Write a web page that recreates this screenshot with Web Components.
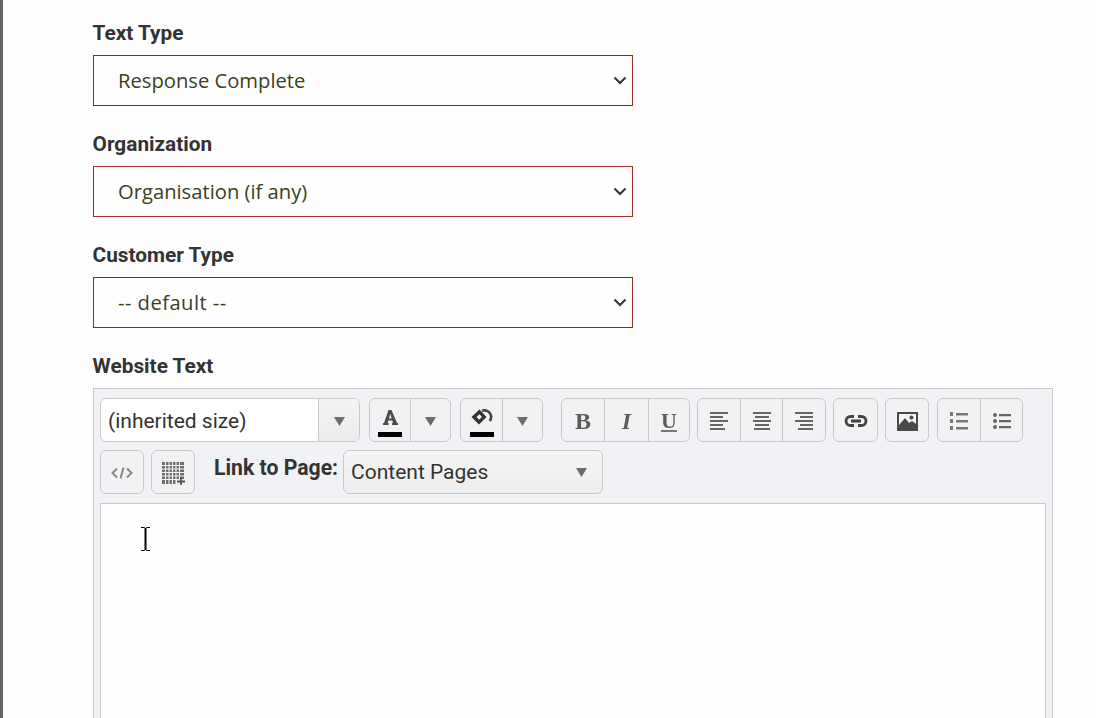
<!DOCTYPE html>
<html><head><meta charset="utf-8">
<style>
html,body{margin:0;padding:0;height:718px;overflow:hidden;background:#fefefe}
body{font-family:Roboto,"Liberation Sans",sans-serif}
app-page{display:block;height:718px;overflow:hidden}
</style></head><body>
<app-page>
<form-select label="Text Type" value="Response Complete"></form-select>
<form-select label="Organization" value="Organisation (if any)" tone="#a33434"></form-select>
<form-select label="Customer Type" value="-- default --" track=".45px"></form-select>
<rich-editor label="Website Text"></rich-editor>
</app-page>
<script>
class AppPage extends HTMLElement{constructor(){super();this.attachShadow({mode:'open'}).innerHTML=`<style>
:host{display:block;border-left:3px solid #666;padding:20px 43px 0 90px;box-sizing:border-box}
</style><slot></slot>`}}
customElements.define('app-page',AppPage);

class FormSelect extends HTMLElement{connectedCallback(){
 const l=this.getAttribute('label'),v=this.getAttribute('value'),t=this.getAttribute('tone')||'#444',k=this.getAttribute('track')||'0';
 this.attachShadow({mode:'open'}).innerHTML=`<style>
:host{display:block;width:540px;height:111px}
label{display:block;font:700 20.8px/26px Roboto,sans-serif;color:#333;height:35px;margin-left:-.4px}
.box{box-sizing:border-box;height:51px;border:1px solid #444;border-top-color:${t};border-bottom-color:${t};border-right-color:#a22a2a;display:flex;align-items:center;justify-content:space-between;padding:0 5px 2px 24px;font:400 20.2px "Open Sans",sans-serif;color:#3a4020;letter-spacing:${k}}
svg{width:14px;height:9px;display:block;margin-top:2px}
</style><label>${l}</label><div class="box"><span>${v}</span><svg viewBox="0 0 14 9"><path d="M1.500 1.500 7 7l5.500-5.500" fill="none" stroke="#33361f" stroke-width="2"/></svg></div>`;
}}
customElements.define('form-select',FormSelect);

const arrow=`<svg width="11" height="9" viewBox="0 0 11 9" style="filter:blur(.4px)"><path d="M0 0h11L5.500 9z" fill="#6c6c6c"/></svg>`;
class TbGroup extends HTMLElement{constructor(){super();this.attachShadow({mode:'open'}).innerHTML=`<style>
:host{display:inline-flex;height:44px;box-sizing:border-box;border:1px solid #c8c8c8;border-radius:6px;background:#f2f2f4;overflow:hidden;flex:none}
::slotted(*){display:flex;align-items:center;justify-content:center;height:100%;box-sizing:border-box;padding-top:2px}
::slotted(*:not(:first-child)){border-left:1px solid #c8c8c8}
</style><slot></slot>`}}
customElements.define('tb-group',TbGroup);

class RichEditor extends HTMLElement{connectedCallback(){
 this.attachShadow({mode:'open'}).innerHTML=`<style>
:host{display:block;width:960px}
label{display:block;font:700 20.8px/26px Roboto,sans-serif;color:#333;height:35px;margin-left:-.4px}
.ed{box-sizing:border-box;height:400px;border:1px solid #c8c8c8;background:#f1f2f5;padding:9px 6px 0 6px}
.row{display:flex;align-items:flex-start;height:52px}
.sizesel{width:260px;height:44px;box-sizing:border-box;border:1px solid #c8c8c8;border-radius:6px;display:flex;overflow:hidden;margin-right:9px;background:#fff}
.sizesel span{flex:1;font:400 21px/44px Roboto,sans-serif;color:#333;padding-left:7px}
.sizesel div{width:41px;border-left:1px solid #c8c8c8;background:linear-gradient(#f4f4f4,#ebebeb);display:flex;align-items:center;justify-content:center;padding-top:2px;box-sizing:border-box}
.swatch{flex-direction:column;justify-content:flex-start;padding-top:0;position:relative}
.swatch svg{margin-top:11px;display:block}
.bar{width:24px;height:5px;background:#000;position:absolute;top:33px}
.link{font:700 21.2px/36px Roboto,sans-serif;color:#333;margin:0 5px 0 19px}
.pagesel{box-sizing:border-box;width:260px;height:44px;border:1px solid #c8c8c8;border-radius:6px;background:linear-gradient(#f5f5f6,#ededee);display:flex;align-items:center;justify-content:space-between;padding:0 15px 0 7px;font:400 21px Roboto,sans-serif;color:#333}
.area{box-sizing:border-box;height:300px;margin-top:1px;background:#fefefe;border:1px solid #c8c8c8;position:relative}
.cursor{position:absolute;left:40px;top:23px}
.soft{filter:blur(.5px)}
.t{font-family:'Liberation Serif',serif;font-weight:700;color:#5c5c5c;filter:blur(.4px)}
</style><label>${this.getAttribute('label')}</label>
<div class="ed">
 <div class="row">
  <div class="sizesel"><span>(inherited size)</span><div>${arrow}</div></div>
  <tb-group style="margin-right:9px"><div class="swatch" style="width:40px"><svg class="soft" width="15" height="15" viewBox="0 0 15 15"><path d="M5.500 0h3L14 13h1v2H9v-2h1l-.7-2.500H5.300L4.600 13h1v2H0v-2h1zM6 8.500h2.700L7.300 4z" fill="#4c4c4c" fill-rule="evenodd"/></svg><div class="bar"></div></div><div style="width:40px">${arrow}</div></tb-group>
  <tb-group style="margin-right:18px"><div class="swatch" style="width:41px"><svg class="soft" width="22" height="16" viewBox="0 0 22 16" style="margin-top:10px"><path d="M8.500 .5 .5 8l7.500 7.500L15.500 8zM5.500 8 8.500 5.200 11 8 8 10.800z" fill="#333" fill-rule="evenodd"/><path d="M11 1.800C15 .6 19 2.500 20 6.500c.4 2-.2 4-1.300 5.500" fill="none" stroke="#444" stroke-width="2.600"/></svg><div class="bar"></div></div><div style="width:40px">${arrow}</div></tb-group>
  <tb-group style="margin-right:7px"><div style="width:43px;border-right:1px solid #c8c8c8"><span class="t" style="font-size:24px">B</span></div><div style="width:43px;border-left:0"><span class="t" style="font-size:24px;font-style:italic">I</span></div><div style="width:41px"><span class="t" style="font-size:22px;line-height:19px;border-bottom:2px solid #777">U</span></div></tb-group>
  <tb-group style="margin-right:7px">
   <div style="width:42px"><svg class="soft" width="18" height="18" viewBox="0 0 18 18" fill="#666"><path d="M0 0h18v2H0zM0 4h13v2H0zM0 8h18v2H0zM0 12h13v2H0zM0 16h15v2H0z"/></svg></div>
   <div style="width:42px"><svg class="soft" width="18" height="18" viewBox="0 0 18 18" fill="#666"><path d="M0 0h18v2H0zM2 4h14v2H2zM0 8h18v2H0zM2 12h14v2H2zM1 16h16v2H1z"/></svg></div>
   <div style="width:43px"><svg class="soft" width="18" height="18" viewBox="0 0 18 18" fill="#666"><path d="M0 0h18v2H0zM5 4h13v2H5zM0 8h18v2H0zM5 12h13v2H5zM3 16h15v2H3z"/></svg></div>
  </tb-group>
  <tb-group style="margin-right:7px"><div style="width:43px"><svg class="soft" width="24" height="12" viewBox="0 0 24 12" fill="none" stroke="#444" stroke-width="2.800"><path d="M10 1.500H6.500a4.500 4.500 0 0 0 0 9H10M14 1.500h3.500a4.500 4.500 0 0 1 0 9H14M7 6h10"/></svg></div></tb-group>
  <tb-group style="margin-right:8px"><div style="width:42px"><svg class="soft" width="21" height="19" viewBox="0 0 21 19"><path d="M0 0h21v19H0z" fill="#4a4a4a"/><path d="M2 2h17v10l-4-3-3 2-4-5-6 7z" fill="#f4f4f6"/><circle cx="14.500" cy="5.500" r="2" fill="#4a4a4a"/></svg></div></tb-group>
  <tb-group><div style="width:42px"><svg class="soft" width="18" height="18" viewBox="0 0 18 18" fill="#777"><path d="M6 1h12v2.400H6zM6 8h12v2.400H6zM6 15h12v2.400H6zM0 0h3v4H0zM0 7h3v4H0zM0 14h3v4H0z"/></svg></div><div style="width:42px"><svg class="soft" width="18" height="16" viewBox="0 0 18 16" fill="#666"><path d="M6 1h12v2.200H6zM6 7h12v2.200H6zM6 13h12v2.200H6z"/><circle cx="2" cy="2" r="2"/><circle cx="2" cy="8" r="2"/><circle cx="2" cy="14" r="2"/></svg></div></tb-group>
 </div>
 <div class="row">
  <tb-group style="margin-right:7px"><div style="width:42px"><svg class="soft" width="22" height="12" viewBox="0 0 22 12" fill="none" stroke="#888" stroke-width="2"><path d="M6 1.500 1.500 6 6 10.500M16 1.500 20.500 6 16 10.500M12.500 .5 9.500 11.500"/></svg></div></tb-group>
  <tb-group><div style="width:42px"><svg class="soft" width="23" height="23" viewBox="0 0 23 23" fill="#555"><path d="M0 0h22v17H14v5H0z" opacity=".85"/><path d="M3.500 0v22M7 0v22M10.500 0v22M14 0v22M17.500 0v17M0 3.500h22M0 7h22M0 10.500h22M0 14h22M0 17.500h14" stroke="#f1f2f5" stroke-width="1.100"/><path d="M15 19.500h8M19 15.500v8" stroke="#555" stroke-width="1.800"/></svg></div></tb-group>
  <span class="link">Link to Page:</span>
  <div class="pagesel"><span>Content Pages</span>${arrow}</div>
 </div>
 <div class="area"><svg class="cursor" width="9" height="24" viewBox="0 0 9 24" fill="none" stroke="#000"><path d="M0 .5h3.500L4.500 1.500 5.500 .5H9M0 23.500h3.500l1-1 1 1H9" stroke-width="1"/><path d="M4.500 1v22" stroke-width="2"/></svg></div>
</div>`;
}}
customElements.define('rich-editor',RichEditor);
</script>
</body></html>
